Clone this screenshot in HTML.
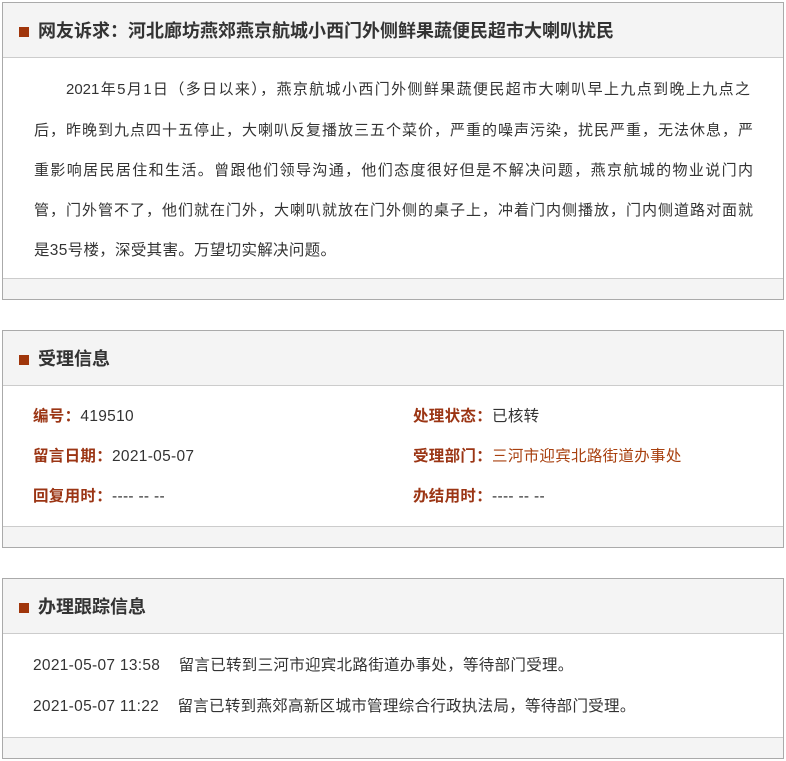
<!DOCTYPE html>
<html><head><meta charset="utf-8"><style>
*{margin:0;padding:0;box-sizing:border-box}
body{width:786px;height:761px;background:#fff;font-family:"Liberation Sans","Noto Sans CJK SC",sans-serif;color:#333;font-size:15.5px;letter-spacing:0.3px;position:relative;overflow:hidden}
.box{position:absolute;left:2px;width:782px;border:1px solid #aaa;background:#fff}
.hd{position:absolute;left:0;top:0;width:780px;height:55px;background:#f4f4f4;border-bottom:1px solid #ccc}
.hd i{position:absolute;left:16px;top:24px;width:10px;height:10px;background:#a0360b}
.hd b{position:absolute;left:35px;top:0;line-height:57px;font-size:18px;letter-spacing:0;color:#333}
.ft{position:absolute;left:0;bottom:0;width:780px;height:21px;background:#f4f4f4;border-top:1px solid #ccc}
.l{position:absolute;white-space:nowrap;line-height:40px;height:40px}
.j{width:719px;text-align:justify;text-align-last:justify;white-space:normal;letter-spacing:0;font-size:15px}
.k{color:#9b3514;font-weight:bold}
.d{color:#a8400f}
</style></head><body>
<div class="box" style="top:2px;height:298px">
<div class="hd"><i></i><b>网友诉求：河北廊坊燕郊燕京航城小西门外侧鲜果蔬便民超市大喇叭扰民</b></div>
<div class="l j" style="left:63px;top:67px;width:684px">2021年5月1日（多日以来），燕京航城小西门外侧鲜果蔬便民超市大喇叭早上九点到晚上九点之</div>
<div class="l j" style="left:31px;top:108px">后，昨晚到九点四十五停止，大喇叭反复播放三五个菜价，严重的噪声污染，扰民严重，无法休息，严</div>
<div class="l j" style="left:31px;top:148px">重影响居民居住和生活。曾跟他们领导沟通，他们态度很好但是不解决问题，燕京航城的物业说门内</div>
<div class="l j" style="left:31px;top:188px">管，门外管不了，他们就在门外，大喇叭就放在门外侧的桌子上，冲着门内侧播放，门内侧道路对面就</div>
<div class="l" style="left:31px;top:228px">是35号楼，深受其害。万望切实解决问题。</div>
<div class="ft"></div>
</div>
<div class="box" style="top:330px;height:218px">
<div class="hd"><i></i><b>受理信息</b></div>
<div class="l" style="left:30px;top:66px"><span class="k">编号：</span>419510</div>
<div class="l" style="left:30px;top:106px"><span class="k">留言日期：</span>2021-05-07</div>
<div class="l" style="left:30px;top:146px"><span class="k">回复用时：</span>---- -- --</div>
<div class="l" style="left:410px;top:66px"><span class="k">处理状态：</span>已核转</div>
<div class="l" style="left:410px;top:106px"><span class="k">受理部门：</span><span class="d">三河市迎宾北路街道办事处</span></div>
<div class="l" style="left:410px;top:146px"><span class="k">办结用时：</span>---- -- --</div>
<div class="ft"></div>
</div>
<div class="box" style="top:578px;height:181px">
<div class="hd"><i></i><b>办理跟踪信息</b></div>
<div class="l" style="left:30px;top:67px">2021-05-07 13:58&nbsp;&nbsp;&nbsp;&nbsp;留言已转到三河市迎宾北路街道办事处，等待部门受理。</div>
<div class="l" style="left:30px;top:108px">2021-05-07 11:22&nbsp;&nbsp;&nbsp;&nbsp;留言已转到燕郊高新区城市管理综合行政执法局，等待部门受理。</div>
<div class="ft"></div>
</div>
</body></html>
